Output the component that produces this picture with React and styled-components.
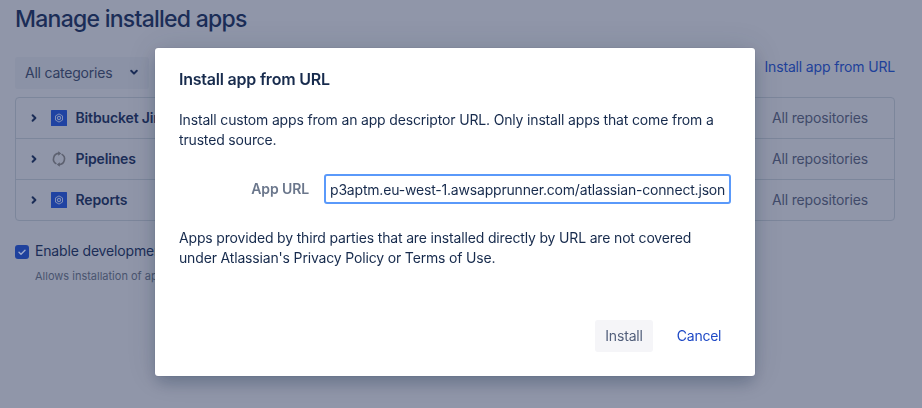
import React from 'react';
import styled, { createGlobalStyle } from 'styled-components';

const GlobalStyle = createGlobalStyle`
  * { box-sizing: border-box; }
  body {
    margin: 0;
    background: #9096a9;
    color: #1b2d57;
    font: 14px/20px Inter, sans-serif;
    letter-spacing: -0.163px;
    overflow: hidden;
  }
`;

const Page = styled.main`
  width: 922px;
  height: 408px;
  padding: 5px 27px 0 15px;
  overflow: hidden;
`;

const PageTitle = styled.h1`
  margin: 0;
  font-size: 23px;
  line-height: 28px;
  font-weight: 550;
  letter-spacing: -0.74px;
`;

const Toolbar = styled.div`
  display: flex;
  justify-content: space-between;
  align-items: flex-start;
  margin-top: 24px;
  height: 40px;
`;

const Select = styled.div`
  display: flex;
  align-items: center;
  justify-content: space-between;
  width: 134px;
  height: 32px;
  padding: 0 8px 0 10px;
  border-radius: 3px;
  background: #8b92a6;
  color: #303d60;
  letter-spacing: -0.22px;

  svg { margin-bottom: 3px; }
`;

const InstallLink = styled.a`
  color: #1e419a;
  line-height: 20px;
`;

const AppTable = styled.div`
  width: 880px;
  border: 1px solid #7c869b;
  border-radius: 4px;
`;

const AppRow = styled.div`
  display: flex;
  align-items: center;
  height: 41px;
  padding: 0 26px 0 11px;

  & + & { border-top: 1px solid #7c869b; }
  &:first-child { height: 40px; }
`;

const IconSlot = styled.span`
  display: flex;
  width: ${(p) => p.$width}px;
`;

const AppName = styled.span`
  flex: 1;
  font-weight: 600;
  letter-spacing: -0.14px;
`;

const Scope = styled.span`
  color: #404a69;
`;

const Option = styled.div`
  display: grid;
  grid-template-columns: 20px 1fr;
  row-gap: 5px;
  align-items: center;
  margin-top: 20px;
`;

const Checkbox = styled.span`
  display: flex;
  align-items: center;
  justify-content: center;
  width: 14px;
  height: 14px;
  border-radius: 3px;
  background: #1f419d;
  margin-top: 2px;
`;

const Hint = styled.span`
  grid-column: 2;
  color: #49546f;
  font-size: 11px;
  letter-spacing: 0;
`;

const Layer = styled.div`
  position: fixed;
  inset: 0;
  display: flex;
  justify-content: center;
  align-items: flex-start;
  padding: 48px 12px 0 0;
`;

const Dialog = styled.section`
  display: flex;
  flex-direction: column;
  width: 600px;
  height: 328px;
  padding: 21px 24px 24px;
  border-radius: 3px;
  background: #fff;
  color: #172b4d;
  box-shadow: 0 0 1px rgba(9, 30, 66, 0.28), 0 8px 16px -2px rgba(9, 30, 66, 0.25),
    0 0 30px rgba(9, 60, 66, 0.12);
`;

const DialogTitle = styled.h2`
  margin: 0 0 21px;
  font-size: 16px;
  line-height: 20px;
  font-weight: 600;
  letter-spacing: -0.22px;
`;

const Copy = styled.p`
  margin: 0;
`;

const Field = styled.div`
  display: flex;
  align-items: center;
  height: 30px;
  margin: 24px 0;
`;

const Label = styled.label`
  width: 130px;
  color: #6b778c;
  font-weight: 600;
  text-align: right;
  letter-spacing: -0.1px;
`;

const UrlInput = styled.div`
  display: flex;
  align-items: center;
  width: 407px;
  height: 30px;
  margin-left: 15px;
  padding: 2px 4px 0 4px;
  border: 2px solid #5a99fa;
  border-radius: 3px;
  white-space: nowrap;
  letter-spacing: -0.19px;
`;

const Actions = styled.div`
  display: flex;
  gap: 14px;
  justify-content: flex-end;
  margin-top: auto;
`;

const Button = styled.button`
  width: ${(p) => (p.$link ? 64 : 58)}px;
  height: 32px;
  padding: 0;
  border: 0;
  border-radius: 3px;
  background: ${(p) => (p.$link ? 'transparent' : '#f5f5f8')};
  color: ${(p) => (p.$link ? '#1f4ac6' : '#525f7b')};
  font: inherit;
  letter-spacing: ${(p) => (p.$link ? -0.26 : -0.16)}px;
`;

const Chevron = ({ down }) => (
  <svg width="14" height="14" viewBox="0 0 14 14" fill="none" stroke="#1b2d57" strokeWidth="2" strokeLinecap="round" strokeLinejoin="round">
    <path d={down ? 'M4.2 5.8 7 8.6l2.8-2.8' : 'M5.6 4.2l2.8 2.8-2.8 2.8'} />
  </svg>
);

const AppBadge = () => (
  <svg width="16" height="16" viewBox="0 0 16 16" fill="none" stroke="#8290b7">
    <rect width="16" height="16" rx="0.5" fill="#2043a2" stroke="none" />
    <path d="M8 3.9l3.5 2v4.2L8 12.1l-3.5-2V5.9z" strokeWidth="1" strokeLinejoin="round" />
    <circle cx="8" cy="8" r="1.6" strokeWidth="1.1" />
  </svg>
);

const PipelinesIcon = () => (
  <svg width="16" height="16" viewBox="0 0 16 16">
    <g fill="none" stroke="#5d6170" strokeWidth="1.6">
      <path d="M5.4 12.9A5.6 5.6 0 0 1 8.4 2.4" />
      <path d="M10.6 3.1A5.6 5.6 0 0 1 7.6 13.6" />
    </g>
    <path d="M7.2.2v4.6L10.2 2.4zM8.8 11.2v4.6L5.8 13.6z" fill="#5d6170" />
  </svg>
);

const apps = [
  { name: 'Bitbucket Jira', icon: AppBadge },
  { name: 'Pipelines', icon: PipelinesIcon },
  { name: 'Reports', icon: AppBadge },
];

export default function App() {
  return (
    <>
      <GlobalStyle />
      <Page>
        <PageTitle>Manage installed apps</PageTitle>
        <Toolbar>
          <Select>All categories<Chevron down /></Select>
          <InstallLink>Install app from URL</InstallLink>
        </Toolbar>
        <AppTable>
          {apps.map(({ name, icon: Icon }) => (
            <AppRow key={name}>
              <IconSlot $width={24}><Chevron /></IconSlot>
              <IconSlot $width={24.5}><Icon /></IconSlot>
              <AppName>{name}</AppName>
              <Scope>All repositories</Scope>
            </AppRow>
          ))}
        </AppTable>
        <Option>
          <Checkbox>
            <svg width="14" height="14" viewBox="0 0 14 14" fill="none" stroke="#9da9cb" strokeWidth="1.4" strokeLinecap="round" strokeLinejoin="round">
              <path d="M4 7.2 6 9.2 10 5.2" />
            </svg>
          </Checkbox>
          <span>Enable development mode</span>
          <Hint>Allows installation of apps</Hint>
        </Option>
      </Page>
      <Layer>
        <Dialog role="dialog">
          <DialogTitle>Install app from URL</DialogTitle>
          <Copy>
            Install custom apps from an app descriptor URL. Only install apps that come from a
            <br />trusted source.
          </Copy>
          <Field>
            <Label>App URL</Label>
            <UrlInput>p3aptm.eu-west-1.awsapprunner.com/atlassian-connect.json</UrlInput>
          </Field>
          <Copy>
            Apps provided by third parties that are installed directly by URL are not covered
            <br />under Atlassian's Privacy Policy or Terms of Use.
          </Copy>
          <Actions>
            <Button>Install</Button>
            <Button $link>Cancel</Button>
          </Actions>
        </Dialog>
      </Layer>
    </>
  );
}
